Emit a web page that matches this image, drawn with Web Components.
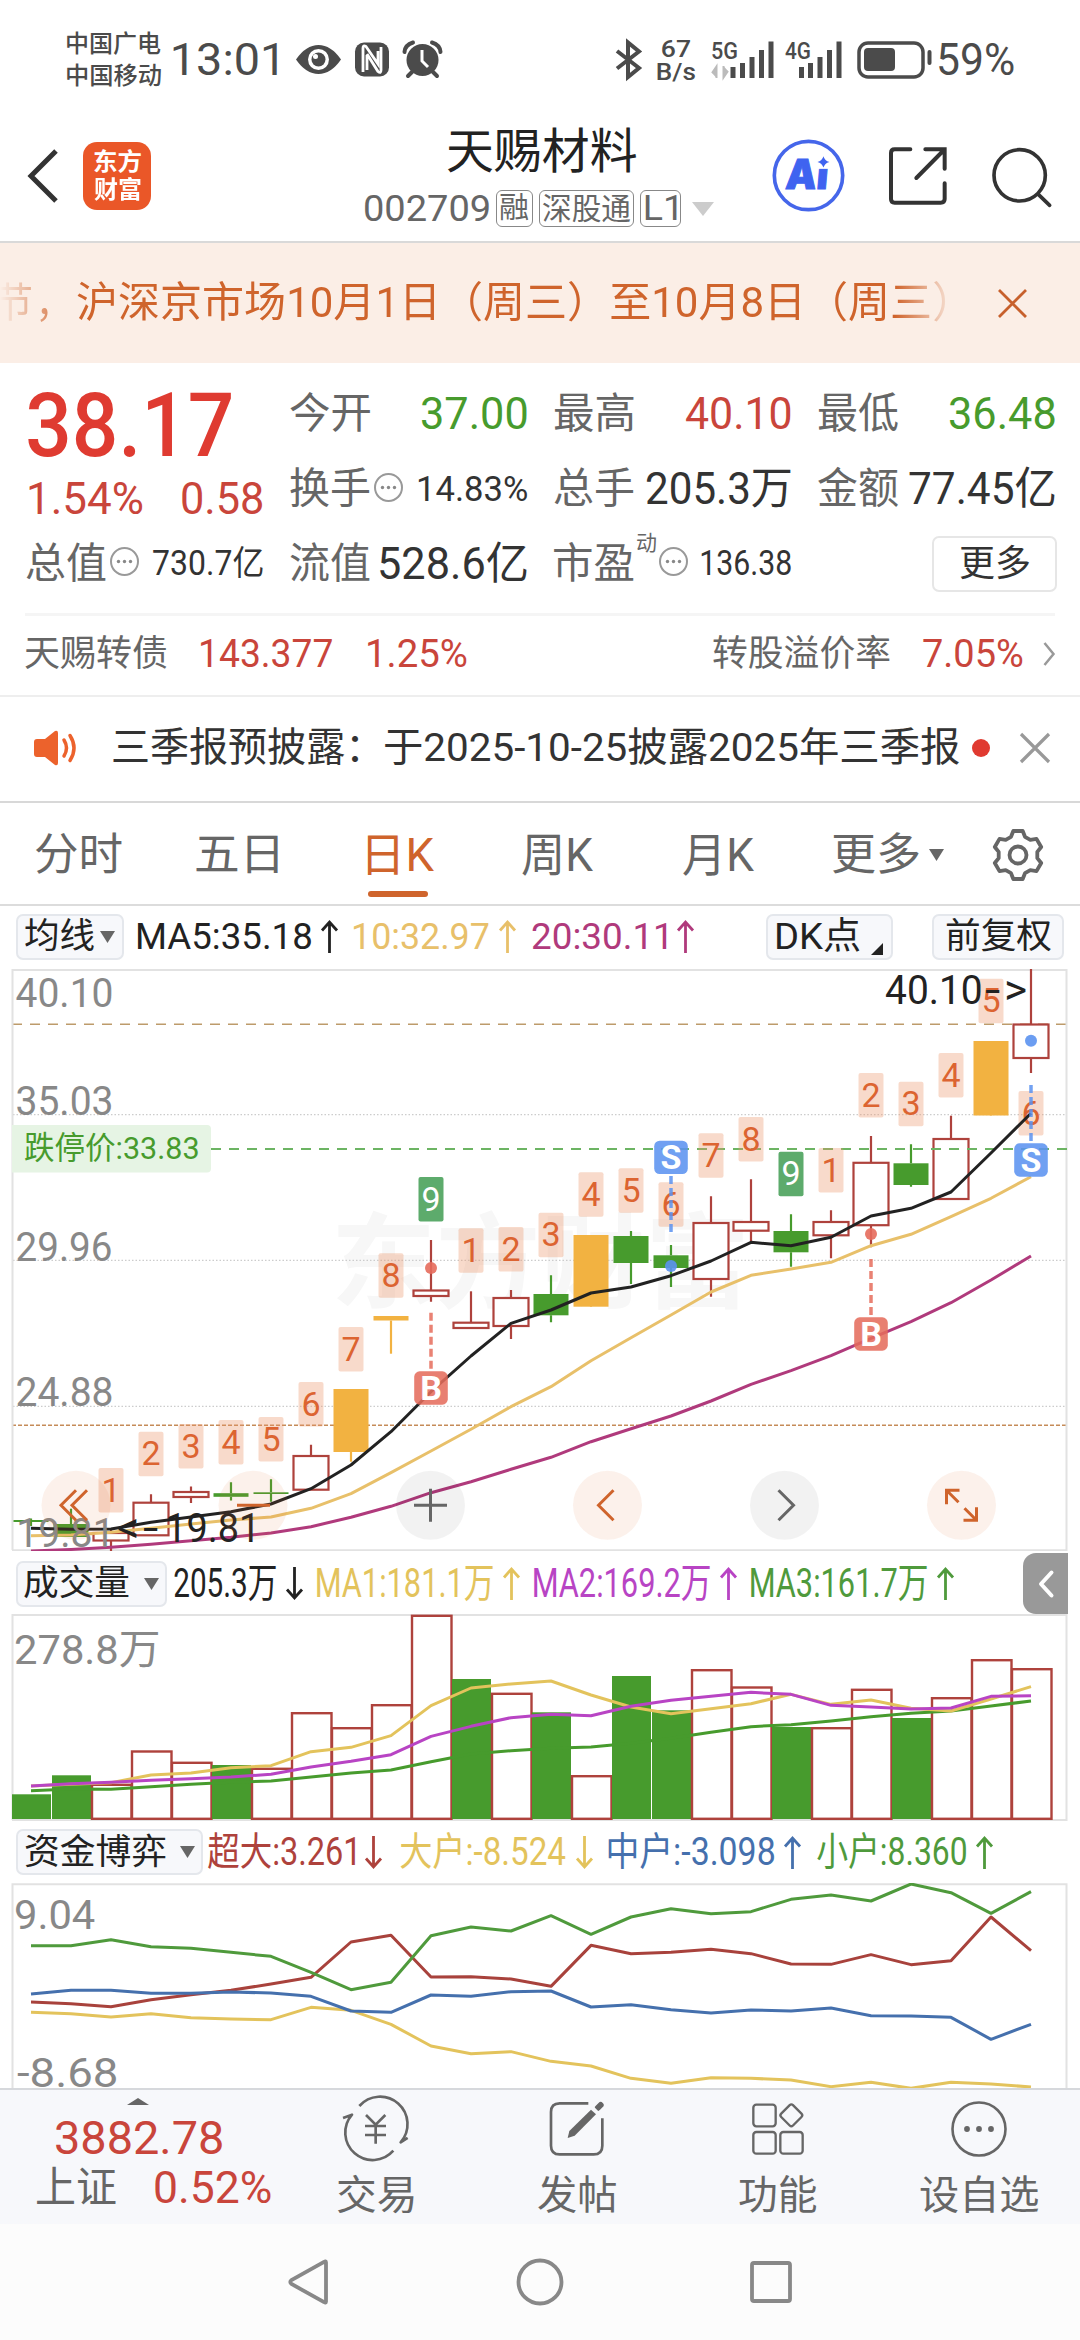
<!DOCTYPE html>
<html lang="zh-CN">
<head>
<meta charset="utf-8">
<title>天赐材料 002709</title>
<style>
  html, body { margin: 0; padding: 0; background: #fff; }
  body { width: 1080px; height: 2340px; overflow: hidden; font-family: Roboto, "Noto Sans CJK SC", sans-serif; color: #222; }
</style>
</head>
<body>
<stock-page></stock-page>

<script>
const FONT = 'Roboto, "Noto Sans CJK SC", sans-serif';
const RED = '#c9453b', GREEN = '#479b2d', GREY = '#666';
const measureCtx = document.createElement('canvas').getContext('2d');

// Ink extent of a text, without its side bearings
function inkOf(text, size, weight = 400) {
  measureCtx.font = `${weight} ${size}px ${FONT}`;
  const m = measureCtx.measureText(text);
  return { left: -m.actualBoundingBoxLeft, width: m.actualBoundingBoxLeft + m.actualBoundingBoxRight };
}

class BaseElement extends HTMLElement {
  constructor() {
    super();
    this.attachShadow({ mode: 'open' });
  }
  connectedCallback() {
    this.shadowRoot.innerHTML = `<style>:host { display: block; box-sizing: border-box; } svg { display: block; flex: none; overflow: visible; } ${this.styles()}</style>${this.html()}`;
  }
  styles() { return ''; }
  html() { return '<slot></slot>'; }
}

// Text squeezed to a given ink width: <fit-text w size weight c gap>
class FitText extends BaseElement {
  styles() {
    const size = +this.getAttribute('size') || 40;
    const weight = this.getAttribute('weight') || 400;
    const ink = inkOf(this.textContent, size, weight);
    const w = +this.getAttribute('w') || ink.width;
    const scale = w / ink.width;
    return `
      :host {
        flex: none; width: ${w}px; height: ${size}px; line-height: ${size}px;
        font-size: ${size}px; font-weight: ${weight}; white-space: nowrap;
        margin-left: ${this.getAttribute('gap') || 0}px;
        color: ${this.getAttribute('c') || 'inherit'};
      }
      span { display: block; width: max-content; transform-origin: 0 0; transform: translateX(${-ink.left * scale}px) scaleX(${scale}); }
    `;
  }
  html() { return '<span><slot></slot></span>'; }
}
customElements.define('fit-text', FitText);

class StatusBar extends BaseElement {
  styles() {
    return `
      :host { height: 110px; padding: 10px 0 0 67px; display: flex; align-items: center; color: #4b4b4b; }
      .carriers { display: flex; flex-direction: column; gap: 8.5px; }
      .icons { margin-left: 19px; }
      .right { margin-left: 173px; }
      .rate { display: flex; flex-direction: column; gap: 0; align-items: center; margin-left: 16px; margin-top: 1px; }
      .signal { margin-left: 17px; }
    `;
  }
  html() {
    return `
      <div class="carriers">
        <fit-text w="94" size="24" weight="500">中国广电</fit-text>
        <fit-text w="94" size="24" weight="500">中国移动</fit-text>
      </div>
      <fit-text w="104" size="44" gap="12">13:01</fit-text>
      <svg class="icons" width="146" height="38" viewBox="295 41 146 38">
        <path d="M295 59.5Q305 45 317.500 45T340 59.500Q330 74 317.500 74T295 59.500Z" fill="#4b4b4b"/>
        <circle cx="317.500" cy="59.500" r="10.500" fill="#fff"/><circle cx="317.500" cy="59.500" r="7" fill="#4b4b4b"/><circle cx="314.500" cy="56.500" r="2.500" fill="#fff"/>
        <rect x="354" y="42.500" width="34" height="34" rx="9" fill="#4b4b4b"/>
        <path d="M362 72V48q0-3 3-1.500L377 64V51M366 55v15M380 47v23q0 4-3 1.500L366 54" fill="none" stroke="#fff" stroke-width="2.800"/>
        <circle cx="421.500" cy="60" r="16" fill="#4b4b4b"/>
        <path d="M403.500 52Q404 45 412 42.500M439.500 52Q439 45 431 42.500M411 72l-4 4M432 72l4 4" fill="none" stroke="#4b4b4b" stroke-width="4" stroke-linecap="round"/>
        <path d="M421 50v11l6 6" fill="none" stroke="#fff" stroke-width="3"/>
      </svg>
      <svg class="right" width="26" height="38" viewBox="614 41 26 38">
        <path d="M616 51l22 17-11 9V42.500l11 9-22 17" fill="none" stroke="#4b4b4b" stroke-width="4"/>
      </svg>
      <div class="rate">
        <fit-text w="29" size="23" weight="500">67</fit-text>
        <fit-text w="38" size="23" weight="500">B/s</fit-text>
      </div>
      <svg class="signal" width="302" height="38" viewBox="712 41 302 38">
        <g fill="#4b4b4b">
          <text x="711" y="58.500" font-size="23.500" font-weight="500" font-family="Roboto" textLength="27" lengthAdjust="spacingAndGlyphs">5G</text>
          <text x="785" y="58.500" font-size="23.500" font-weight="500" font-family="Roboto" textLength="26" lengthAdjust="spacingAndGlyphs">4G</text>
          <path d="M730.500 67h5v11h-5zM740 63h5v15h-5zM749.500 57h5v21h-5zM759 50h5v28h-5zM768.500 41.500h5v36.500h-5z"/>
          <path d="M799 67h5v11h-5zM808 63h5v15h-5zM817.500 57h5v21h-5zM827 50h5v28h-5zM836.500 41.500h5v36.500h-5z"/>
          <rect x="864" y="48" width="31" height="23" rx="4"/>
          <rect x="927.500" y="50" width="4" height="15" rx="2"/>
        </g>
        <rect x="859" y="43" width="64" height="34" rx="9" fill="none" stroke="#4b4b4b" stroke-width="3.500"/>
        <path d="M712 73l4.500-6.500V78M728 71l-4.500 6.500V66" fill="#bbb" stroke="#bbb" stroke-width="2"/>
      </svg>
      <fit-text w="75" size="44" gap="-75">59%</fit-text>
    `;
  }
}
customElements.define('status-bar', StatusBar);

class StockHeader extends BaseElement {
  styles() {
    return `
      :host { height: 133px; padding-left: 26px; display: flex; align-items: center; border-bottom: 2px solid #d9d9d9; }
      .logo { width: 68px; height: 68px; margin-left: 25px; border-radius: 14px; background: #ea5728; color: #fff; display: flex; flex-direction: column; align-items: center; justify-content: center; gap: 4px; }
      .title { width: 349px; margin-left: 214px; display: flex; flex-direction: column; align-items: center; gap: 14px; padding-top: 5px; }
      .code { width: 100%; display: flex; align-items: center; color: ${GREY}; }
      .tag { height: 37px; box-sizing: border-box; border: 1.5px solid #888; border-radius: 6px; display: flex; align-items: center; justify-content: center; }
    `;
  }
  html() {
    return `
      <svg width="32" height="56" viewBox="0 0 32 56"><path d="M30 3L5 28l25 25" fill="none" stroke="#333" stroke-width="5"/></svg>
      <div class="logo">
        <fit-text w="47" size="24" weight="700">东方</fit-text>
        <fit-text w="47" size="24" weight="700">财富</fit-text>
      </div>
      <div class="title">
        <fit-text w="189" size="47.500" gap="3">天赐材料</fit-text>
        <div class="code">
          <fit-text w="124" size="37.500">002709</fit-text>
          <div class="tag" style="width:37px;margin-left:7px"><fit-text w="28" size="29">融</fit-text></div>
          <div class="tag" style="width:96px;margin-left:6px"><fit-text w="88" size="30">深股通</fit-text></div>
          <div class="tag" style="width:41px;margin-left:6px"><fit-text w="32" size="35">L1</fit-text></div>
          <svg width="22" height="14" viewBox="0 0 22 14" style="margin-left:11px"><path d="M0 0h22L11 14z" fill="#ccc"/></svg>
        </div>
      </div>
      <svg width="73" height="73" viewBox="66 26 220 220" style="margin-left:58px">
        <circle cx="176" cy="136" r="103" fill="none" stroke="#4566ea" stroke-width="11"/>
        <text x="104" y="178" font-family="Inter" font-weight="900" font-size="124" fill="#3f63f0" stroke="#3f63f0" stroke-width="3" textLength="128" lengthAdjust="spacingAndGlyphs" transform="translate(17 0) skewX(-5) translate(-1 0)">Ai</text>
        <path d="M197 74h49v42h-49z" fill="#fff"/>
        <path d="M221 78q4 14 18 17-14 4-18 17-4-13-18-17 14-3 18-17z" fill="#3f63f0"/>
      </svg>
      <svg width="60" height="60" viewBox="410 46 180 180" style="margin-left:43px" fill="none" stroke="#333" stroke-width="12" stroke-linecap="round">
        <path d="M477 56H430Q419 56 419 67V205Q419 216 430 216H568Q580 216 580 205V158M522 56H580V114M578 58L495 142"/>
      </svg>
      <svg width="62" height="62" viewBox="720 36 186 186" style="margin-left:43px" fill="none" stroke="#333" stroke-width="11" stroke-linecap="round">
        <circle cx="806" cy="127" r="77"/><path d="M862 184L896 217"/>
      </svg>
    `;
  }
}
customElements.define('stock-header', StockHeader);

class NoticeBanner extends BaseElement {
  styles() {
    return `
      :host { height: 120px; background: #fbeee6; color: #cf642c; display: flex; align-items: center; }
      .marquee { width: 950px; height: 60px; overflow: hidden; display: flex; align-items: center; -webkit-mask-image: linear-gradient(90deg, transparent 0, #000 70px, #000 895px, transparent 955px); }
    `;
  }
  html() {
    return `
      <div class="marquee">
        <fit-text w="34" size="41" gap="-3">节</fit-text>
        <fit-text w="8" size="41" gap="9">，</fit-text>
        <fit-text w="868" size="42.500" gap="29">沪深京市场10月1日（周三）至10月8日（周三）</fit-text>
      </div>
      <svg width="29" height="29" viewBox="0 0 29 29" style="margin-left:48px"><path d="M1 1l27 27M28 1L1 28" stroke="#c7602c" stroke-width="2.800"/></svg>
    `;
  }
}
customElements.define('notice-banner', NoticeBanner);

const dots = '<svg width="31" height="31" viewBox="0 0 31 31" style="margin:0 0 4px 3px"><circle cx="15.500" cy="15.500" r="13.500" fill="none" stroke="#999" stroke-width="2"/><g fill="#888"><circle cx="9.500" cy="15.500" r="1.700"/><circle cx="15.500" cy="15.500" r="1.700"/><circle cx="21.500" cy="15.500" r="1.700"/></g></svg>';

// One label / value pair; the tip attribute adds the round hint icon
class QuoteCell extends BaseElement {
  styles() {
    return `
      :host { display: flex; align-items: center; }
      .value { margin-left: auto; }
      .sup { align-self: flex-start; margin: 7px -1px 0 3px; }
    `;
  }
  html() {
    const a = name => this.getAttribute(name);
    return `
      <fit-text w="80" size="42" c="${GREY}">${a('label')}</fit-text>
      ${a('sup') ? `<fit-text class="sup" w="19" size="21" c="${GREY}">${a('sup')}</fit-text>` : ''}
      ${this.hasAttribute('tip') ? dots : ''}
      <div class="value"><fit-text w="${a('w')}" size="${this.hasAttribute('tip') ? 34.5 : 44}" c="${a('c') || '#333'}">${a('value')}</fit-text></div>
    `;
  }
}
customElements.define('quote-cell', QuoteCell);

class QuotePanel extends BaseElement {
  styles() {
    return `
      :host { height: 250px; padding: 13px 25px 0 26px; display: grid; grid-template: 76px 74px 75px / repeat(4, 1fr); column-gap: 27px; }
      .price { grid-row: 1 / 3; display: flex; flex-direction: column; color: ${RED}; }
      .last { height: 98px; display: flex; align-items: center; color: #df3b31; }
      .change { height: 52px; display: flex; align-items: center; justify-content: space-between; padding-left: 3px; }
      .more { justify-self: end; align-self: center; margin-right: -2px; width: 125px; height: 56px; box-sizing: border-box; border: 2px solid #e6e6e6; border-radius: 7px; display: flex; align-items: center; justify-content: center; }
    `;
  }
  html() {
    return `
      <div class="price">
        <div class="last"><fit-text w="203" size="89" weight="500" gap="2">38.17</fit-text></div>
        <div class="change"><fit-text w="113" size="43.500">1.54%</fit-text><fit-text w="81" size="43.500">0.58</fit-text></div>
      </div>
      <quote-cell label="今开" value="37.00" w="105" c="${GREEN}"></quote-cell>
      <quote-cell label="最高" value="40.10" w="105" c="${RED}"></quote-cell>
      <quote-cell label="最低" value="36.48" w="105" c="${GREEN}"></quote-cell>
      <quote-cell label="换手" value="14.83%" w="109" tip></quote-cell>
      <quote-cell label="总手" value="205.3万" w="144"></quote-cell>
      <quote-cell label="金额" value="77.45亿" w="146"></quote-cell>
      <quote-cell label="总值" value="730.7亿" w="110" tip></quote-cell>
      <quote-cell label="流值" value="528.6亿" w="147"></quote-cell>
      <quote-cell label="市盈" sup="动" value="136.38" w="90" tip></quote-cell>
      <div class="more"><fit-text w="69" size="36" c="#333">更多</fit-text></div>
    `;
  }
}
customElements.define('quote-panel', QuotePanel);

class BondRow extends BaseElement {
  styles() {
    return `
      :host { height: 84px; padding: 0 25px; color: ${RED}; border-bottom: 2px solid #eee; }
      .row { height: 82px; box-sizing: border-box; border-top: 3px solid #f5f5f5; display: flex; align-items: center; padding-bottom: 4px; }
    `;
  }
  html() {
    return `
      <div class="row">
        <fit-text w="142" size="36" c="${GREY}">天赐转债</fit-text>
        <fit-text w="131" size="38" gap="34">143.377</fit-text>
        <fit-text w="99" size="38" gap="36">1.25%</fit-text>
        <div style="flex:1"></div>
        <fit-text w="177" size="36" c="${GREY}">转股溢价率</fit-text>
        <fit-text w="100" size="38" gap="33">7.05%</fit-text>
        <svg width="12" height="24" viewBox="0 0 12 24" style="margin-left:20px"><path d="M1.500 1l9 11-9 11" fill="none" stroke="#999" stroke-width="2.500"/></svg>
      </div>
    `;
  }
}
customElements.define('bond-row', BondRow);

class NewsRow extends BaseElement {
  styles() {
    return `:host { height: 106px; padding: 0 31px 2px 33px; display: flex; align-items: center; color: #333; border-bottom: 2px solid #d8d8d8; }`;
  }
  html() {
    return `
      <svg width="46" height="36" viewBox="0 0 46 36">
        <path d="M4 9h8L22 1q3-1 3 2v30q0 3-3 2L12 27H4q-3 0-3-3V12q0-3 3-3z" fill="#ec622c"/>
        <path d="M31 10q5 8 0 16M37 5.500q8 12.500 0 25" fill="none" stroke="#ec622c" stroke-width="3.500" stroke-linecap="round"/>
      </svg>
      <fit-text w="245" size="39.500" gap="34">三季报预披露：</fit-text>
      <fit-text w="575" size="39.500" gap="27">于2025-10-25披露2025年三季报</fit-text>
      <svg width="18" height="18" style="margin-left:12px"><circle cx="9" cy="9" r="9" fill="#e03a30"/></svg>
      <svg width="30" height="30" viewBox="0 0 30 30" style="margin-left:30px"><path d="M1 1l28 28M29 1L1 29" stroke="#999" stroke-width="3.200"/></svg>
    `;
  }
}
customElements.define('news-row', NewsRow);

class PeriodTabs extends BaseElement {
  gear() {
    const pts = [];
    for (let k = 0; k < 6; k++) {
      [[-21, 19.5], [-11, 24.5], [11, 24.5], [21, 19.5]].forEach(([d, r]) => {
        const a = (k * 60 - 90 + d) * Math.PI / 180;
        pts.push(`${(27 + r * Math.cos(a)).toFixed(1)},${(27 + r * Math.sin(a)).toFixed(1)}`);
      });
    }
    return `<svg width="54" height="54" viewBox="0 0 54 54" style="margin-left:47px" fill="none" stroke="${GREY}" stroke-width="3.800" stroke-linejoin="round"><polygon points="${pts.join(' ')}"/><circle cx="27" cy="27" r="8.500"/></svg>`;
  }
  styles() {
    return `
      :host { height: 103px; padding: 2px 0 0 35px; display: flex; align-items: center; color: ${GREY}; border-bottom: 2px solid #dcdcdc; }
      .on { position: relative; color: #cf642c; margin-left: 90px; }
      .on::after { content: ""; position: absolute; left: 0; top: 59px; width: 60px; height: 6px; border-radius: 3px; background: #cf642c; }
    `;
  }
  html() {
    return `
      <fit-text w="87" size="44">分时</fit-text>
      <fit-text w="82" size="44" gap="74">五日</fit-text>
      <div class="on"><fit-text w="66" size="46">日K</fit-text></div>
      <fit-text w="71" size="46" gap="88">周K</fit-text>
      <fit-text w="71" size="46" gap="90">月K</fit-text>
      <fit-text w="86" size="44" gap="79">更多</fit-text>
      <svg width="15" height="12" style="margin-left:10px"><path d="M0 0h15L7.500 12z" fill="${GREY}"/></svg>
      ${this.gear()}
    `;
  }
}
customElements.define('period-tabs', PeriodTabs);

class PillButton extends BaseElement {
  styles() {
    return `
      :host { flex: none; width: ${this.getAttribute('w')}px; height: 46px; margin-left: ${this.getAttribute('gap') || 0}px; border: 2px solid #e4e7ec; border-radius: 7px; background: #f7f8fb; display: flex; align-items: center; justify-content: center; }
      .corner { align-self: flex-end; margin-bottom: 3px; }
    `;
  }
  html() {
    const arrow = this.getAttribute('arrow');
    return `<slot></slot>
      ${arrow === 'down' ? `<svg width="15" height="12" style="margin-left:${this.getAttribute('arrow-gap') || 6}px"><path d="M0 0h15L7.500 12z" fill="${GREY}"/></svg>` : ''}
      ${arrow === 'corner' ? '<svg class="corner" width="12" height="12" style="margin-left:11px"><path d="M12 0v12H0z" fill="#222"/></svg>' : ''}`;
  }
}
customElements.define('pill-button', PillButton);

// Thin up / down arrow that follows a legend value
class TrendArrow extends BaseElement {
  styles() {
    return `:host { flex: none; margin-left: 9px; width: 19px; color: ${this.getAttribute('c')}; ${this.hasAttribute('down') ? 'transform: scaleY(-1);' : ''} }`;
  }
  html() {
    return '<svg width="19" height="33" viewBox="0 0 19 33"><path d="M9.500 33V2M2 10.500L9.500 2l7.500 8.500" fill="none" stroke="currentColor" stroke-width="2.800"/></svg>';
  }
}
customElements.define('trend-arrow', TrendArrow);

class ChartLegend extends BaseElement {
  styles() {
    return `:host { height: ${this.getAttribute('h')}px; padding-left: 16px; display: flex; align-items: center; }`;
  }
}
customElements.define('chart-legend', ChartLegend);

class ChartBase extends BaseElement {
  styles() { return ':host { position: relative; }'; }
  cx(i) { return 31 + i * 40; }
  label(x, y, size, text, width, fill = '#888', weight = 400) {
    const ink = inkOf(text, size, weight);
    const s = width / ink.width;
    return `<text transform="translate(${x} ${y}) scale(${s.toFixed(4)} 1)" x="${-ink.left}" font-size="${size}" font-weight="${weight}" fill="${fill}">${text.replace(/</g, '&lt;')}</text>`;
  }
  line(values, color, width = 3) {
    return `<polyline points="${values.map((v, i) => this.cx(i) + ',' + v).join(' ')}" fill="none" stroke="${color}" stroke-width="${width}" stroke-linejoin="round"/>`;
  }
  svg(top, height, body) {
    return `<svg width="1080" height="${height}" viewBox="0 ${top} 1080 ${height}" font-family='${FONT}' style="overflow:hidden">${body}</svg>`;
  }
}

class KChart extends ChartBase {
  constructor() {
    super();
    // kind, body top, body bottom, wick top, wick bottom
    this.candles = [
      ['g', 1520, 1522, 1518.5, 1526], ['g', 1524, 1537, 1508.7, 1537], ['r', 1533, 1540.5, 1530, 1551.7],
      ['r', 1502.7, 1535.3, 1494.3, 1535], ['r', 1492, 1497, 1486.5, 1503], ['g', 1493.2, 1496.8, 1482.3, 1500.5],
      ['g', 1492.3, 1494, 1479.3, 1501.7], ['r', 1456, 1489.7, 1444.7, 1489], ['o', 1389, 1452, 1389, 1461.7],
      ['o', 1316, 1320.5, 1316, 1353.7], ['r', 1290.5, 1296, 1240, 1301.7], ['r', 1322.7, 1328, 1291.3, 1328],
      ['r', 1298, 1326, 1290, 1339], ['g', 1294, 1315.3, 1275.3, 1322.3], ['o', 1235, 1306.7, 1235, 1306],
      ['g', 1236, 1263, 1231, 1284], ['g', 1255.3, 1268, 1245, 1287], ['r', 1223, 1279, 1196.3, 1296.7],
      ['r', 1222, 1230.7, 1179.3, 1241.7], ['g', 1231, 1252.3, 1214.3, 1266.7], ['r', 1222, 1235.3, 1210.3, 1258.3],
      ['r', 1162.8, 1225.2, 1136, 1247.3], ['g', 1163.3, 1185, 1144.3, 1186.7], ['r', 1139, 1199, 1115.7, 1199],
      ['o', 1041, 1115.5, 1041, 1115], ['r', 1024.5, 1058, 969, 1073]
    ];
    // candle index, number, tag top
    this.tags = [
      [2, 1, 1468], [3, 2, 1431.7], [4, 3, 1424], [5, 4, 1420], [6, 5, 1417], [7, 6, 1382], [8, 7, 1327], [9, 8, 1253.3],
      [10, 9, 1177], [11, 1, 1228.3], [12, 2, 1227], [13, 3, 1212.7], [14, 4, 1172.3], [15, 5, 1168.3], [16, 6, 1182.3],
      [17, 7, 1133.3], [18, 8, 1117], [19, 9, 1151.7], [20, 1, 1148], [21, 2, 1073], [22, 3, 1081.7], [23, 4, 1053],
      [24, 5, 978.7], [25, 6, 1091]
    ];
    this.ma5 = [1528.3, 1529.3, 1529, 1522.3, 1517, 1511.7, 1504, 1488.7, 1465, 1431.7, 1391.7, 1356, 1323.3, 1310, 1293, 1287, 1275.7, 1261, 1242.3, 1245.7, 1237.3, 1216, 1208.3, 1192, 1153, 1113.3];
    this.ma10 = [1535.7, 1535, 1532.3, 1528.3, 1524, 1520, 1517, 1508.3, 1493.7, 1472.7, 1451, 1429.3, 1406.7, 1386.7, 1360.7, 1337.7, 1315, 1292, 1275.3, 1269, 1262.3, 1245.7, 1234.3, 1216.7, 1198.3, 1176.7];
    this.ma20 = [1551, 1549.5, 1547.3, 1544.3, 1540.7, 1537.3, 1533, 1526.7, 1517.3, 1506.3, 1492.7, 1481.7, 1469.3, 1457.3, 1441.7, 1428.7, 1416, 1401, 1384.3, 1370.7, 1355.7, 1338.3, 1321.7, 1302.7, 1280, 1256];
  }

  candle([kind, top, bottom, high, low], i) {
    const x = this.cx(i);
    const color = { r: '#ae423c', g: '#479b2d', o: '#f2b241' }[kind];
    const wick = `<path d="M${x} ${high}V${top}M${x} ${bottom}V${low}" stroke="${color}" stroke-width="2.200"/>`;
    if (kind === 'r') return wick + `<rect x="${x - 17.5}" y="${top}" width="35" height="${bottom - top}" fill="#fff" stroke="${color}" stroke-width="2.200"/>`;
    return wick + `<rect x="${x - 17.5}" y="${top}" width="35" height="${bottom - top}" fill="${color}"/>`;
  }

  tag([i, n, top]) {
    const x = this.cx(i);
    const nine = n === 9;
    return `<rect x="${x - 12.5}" y="${top}" width="25" height="44.500" rx="2" fill="${nine ? '#5dab6c' : 'rgba(235,150,105,.35)'}"/>
      <text x="${x}" y="${top + 33.5}" text-anchor="middle" font-size="34" fill="${nine ? '#fff' : '#dc6431'}">${n}</text>`;
  }

  marker(i, top, letter, dash0, dash1, dotY) {
    const x = this.cx(i);
    const color = letter === 'S' ? '#5b92f0' : '#e56c5c';
    return `<circle cx="${x}" cy="${dotY}" r="6" fill="${color}" fill-opacity=".9"/>
      <path d="M${x} ${dash0}V${dash1}" stroke="${color}" stroke-opacity=".85" stroke-width="3.500" stroke-dasharray="8 4"/>
      <rect x="${x - 16.8}" y="${top}" width="33.600" height="33.400" rx="5.500" fill="${color}" fill-opacity=".87"/>
      <text x="${x}" y="${top + 28.5}" text-anchor="middle" font-size="34" font-weight="700" fill="#fff">${letter}</text>`;
  }

  floatButton(cx, grey, path) {
    return `<circle cx="${cx}" cy="1505.300" r="34.500" fill="${grey ? 'rgba(0,0,0,.05)' : 'rgba(228,120,60,.1)'}"/>
      <path d="${path}" transform="translate(${cx} 1505.300)" fill="none" stroke="${grey ? '#666' : '#cf642c'}" stroke-width="3"/>`;
  }

  html() {
    return this.svg(969, 582, `
      ${this.label(337, 1300, 104, '东方财富', 406, '#f7f7f7', 700)}
      <g fill="none">
        <path d="M13 1114.700H1067M13 1260.300H1067M13 1406.300H1067" stroke="#ccc" stroke-width="1.200" stroke-dasharray="1.500 2"/>
        <path d="M12 1024.300H1067" stroke="#bd9b6b" stroke-width="1.500" stroke-dasharray="10 8"/>
        <path d="M12 1425.300H1067" stroke="#c58b58" stroke-width="1.600" stroke-dasharray="4 2"/>
        <path d="M12.500 1550V970H1066.500V1550.200H12" stroke="#e2e2e2" stroke-width="2"/>
      </g>
      ${this.label(16.5, 1006.5, 41, '40.10', 95)}
      ${this.label(16.5, 1114.7, 41, '35.03', 95)}
      ${this.label(16.5, 1260.7, 41, '29.96', 95)}
      ${this.label(16.5, 1405.5, 41, '24.88', 95)}
      ${this.candles.map((c, i) => this.candle(c, i)).join('')}
      <path d="M211 1149H1067" stroke="#6cb463" stroke-width="2" stroke-dasharray="10 8"/>
      <path d="M12 1125H207q4 0 4 4V1168.500q0 4-4 4H12z" fill="#e6f4e4"/>
      ${this.label(25, 1159, 31.5, '跌停价:33.83', 173, '#479b2d')}
      ${this.tags.map(t => this.tag(t)).join('')}
      ${this.line(this.ma20, '#b03a7c')}
      ${this.line(this.ma10, '#e8c06a')}
      ${this.line(this.ma5, '#222')}
      ${this.label(19, 1547, 41, '19.81', 88)}
      ${this.marker(10, 1371.3, 'B', 1312.7, 1369, 1268)}
      ${this.marker(16, 1140.7, 'S', 1176, 1232, 1266)}
      ${this.marker(21, 1317.3, 'B', 1259, 1315, 1234)}
      ${this.marker(25, 1143.3, 'S', 1085, 1141, 1040.7)}
      ${this.label(886, 1004, 40.5, '40.10', 95, '#222')}
      ${this.label(985, 1004, 40.5, '-', 15, '#222')}
      ${this.label(1006, 1004, 42, '>', 20, '#222')}
      ${this.label(118, 1542, 42, '<', 19, '#222')}
      ${this.label(143, 1542, 40.5, '-', 15, '#222')}
      ${this.label(168, 1542, 40.5, '19.81', 85, '#222')}
      ${this.floatButton(76, false, 'M0-15L-15 0L0 15M11-15L-4 0L11 15')}
      ${this.floatButton(253, false, 'M-16 0H17')}
      ${this.floatButton(430.5, true, 'M-16.500 0H16.500M0-16.500V16.500')}
      ${this.floatButton(607.5, false, 'M6-15L-9 0L6 15')}
      ${this.floatButton(784.5, true, 'M-6-15L9 0L-6 15')}
      ${this.floatButton(961.5, false, 'M-2-15H-15V-1M-15-15L-3-3M15 2V15H2M15 15L3 3')}
    `);
  }
}
customElements.define('k-chart', KChart);

class VolumeChart extends ChartBase {
  html() {
    const kinds = 'ggrrrgrrrrrgrgrggrrgrrgrrr';
    const tops = [1794.3, 1775.3, 1784.3, 1751, 1762.3, 1765, 1768.3, 1712.7, 1727.7, 1704.7, 1615.3, 1679, 1693.3, 1712.3, 1775.7, 1676, 1710.3, 1669.7, 1687, 1727, 1727.7, 1689.3, 1718, 1697.7, 1659.7, 1668.7];
    const y = list => list.map(v => v / 3 + 1600);
    const ma1 = y([558, 553, 548, 525, 519, 503, 497, 455, 442, 407, 317, 264, 252, 243, 285, 321, 341, 326, 311, 283, 313, 300, 325, 333, 297, 260]);
    const ma2 = y([558, 551, 547, 541, 536, 531, 523, 501, 484, 464, 409, 379, 353, 343, 347, 319, 301, 289, 277, 283, 316, 321, 327, 324, 289, 287]);
    const ma3 = y([572, 567, 568, 560, 553, 547, 543, 531, 519, 510, 485, 462, 452, 445, 441, 430, 415, 397, 380, 374, 363, 350, 340, 333, 318, 303]);
    const bars = tops.map((top, i) => {
      const x = 12 + i * 40;
      return kinds[i] === 'g'
        ? `<rect x="${x}" y="${top}" width="39" height="${1819 - top}" fill="#479b2d"/>`
        : `<rect x="${x}" y="${top + 0.5}" width="39.500" height="${1818.300 - top}" fill="#fff" stroke="#ae423c" stroke-width="2.400"/>`;
    }).join('');
    return this.svg(1614, 207, `
      <path d="M12.500 1820V1615H1066.500V1820H12" fill="none" stroke="#e2e2e2" stroke-width="2"/>
      ${bars}
      ${this.line(ma3, '#479b2d')}${this.line(ma1, '#e3c35c')}${this.line(ma2, '#b844c4')}
      ${this.label(15, 1664.3, 41.5, '278.8万', 143)}
    `);
  }
}
customElements.define('volume-chart', VolumeChart);

class FlowChart extends ChartBase {
  html() {
    const y = list => list.map(v => v / 3 + 1860);
    const small = y([257, 257, 239, 260, 265, 277, 289, 337, 389, 367, 227, 201, 213, 167, 223, 171, 146, 161, 155, 118, 105, 123, 72, 98, 160, 95]);
    const huge = y([426, 431, 440, 419, 404, 391, 372, 352, 246, 226, 351, 350, 357, 379, 256, 281, 277, 268, 281, 312, 313, 284, 314, 302, 171, 272]);
    const mid = y([402, 391, 391, 400, 400, 396, 399, 409, 453, 457, 405, 409, 395, 393, 441, 434, 449, 459, 450, 453, 444, 467, 468, 472, 538, 493]);
    const big = y([457, 461, 471, 461, 473, 477, 479, 442, 451, 493, 558, 581, 575, 604, 618, 655, 670, 653, 655, 660, 680, 667, 685, 667, 672, 681]);
    return this.svg(1883, 205, `
      <path d="M12.500 2090V1884.200H1066.500V2090" fill="none" stroke="#e2e2e2" stroke-width="2"/>
      ${this.label(16, 1928.5, 41.5, '9.04', 79)}
      ${this.label(17, 2086.5, 41.5, '-8.68', 100)}
      ${this.line(big, '#e3c35c')}${this.line(huge, '#a8423c')}${this.line(mid, '#4570ad')}${this.line(small, '#4f9a3c')}
    `);
  }
}
customElements.define('flow-chart', FlowChart);

class NavItem extends BaseElement {
  styles() {
    return `
      :host { width: 201.400px; height: 100%; display: flex; flex-direction: column; align-items: center; }
      .icon { height: 78px; margin-bottom: 8px; display: flex; align-items: center; }
    `;
  }
  html() {
    return `<div class="icon"><slot></slot></div><fit-text w="${this.getAttribute('w')}" size="39.500">${this.getAttribute('label')}</fit-text>`;
  }
}
customElements.define('nav-item', NavItem);

class BottomNav extends BaseElement {
  styles() {
    return `
      :host { height: 136px; background: #f7f8fb; border-top: 2px solid #d6d8dc; color: ${GREY}; display: flex; }
      .index { width: 275px; display: flex; flex-direction: column; align-items: flex-start; color: ${RED}; padding-top: 8px; }
      .row { display: flex; align-items: center; gap: 39px; margin: 5px 0 0 37px; }
    `;
  }
  html() {
    return `
      <div class="index">
        <svg width="22" height="7" style="margin-left:127px"><path d="M0 7L11 0l11 7z" fill="${GREY}"/></svg>
        <fit-text w="166" size="47" gap="56" style="margin-top:9px">3882.78</fit-text>
        <div class="row"><fit-text w="79" size="42" c="${GREY}">上证</fit-text><fit-text w="116" size="44">0.52%</fit-text></div>
      </div>
      <nav-item label="交易" w="77">
        <svg width="68" height="61.300" viewBox="36 22 204 184" fill="none" stroke="#666" stroke-width="8">
          <path d="M88 46A82 82 0 0 1 212 155L233 142M190 180A82 82 0 0 1 66 72L39 82" stroke-linejoin="round"/>
          <path d="M108 73L137 102L166 73M137 102V159M105 106H168M105 133H168"/>
        </svg>
      </nav-item>
      <nav-item label="发帖" w="78">
        <svg width="60" height="60" viewBox="652 24 180 180" fill="none" stroke="#666" stroke-width="8">
          <path d="M776 37H690Q664 37 664 63V164Q664 190 690 190H792Q818 190 818 164V82"/>
          <path d="M714 141L719 120L784 56L799 70L735 134Z" fill="#666" stroke="none"/>
          <path d="M804 51L813 42" stroke-width="18" stroke-linecap="round"/><path d="M786 44L806 64" stroke="#f7f8fb" stroke-width="5"/>
        </svg>
      </nav-item>
      <nav-item label="功能" w="78">
        <svg width="56" height="56" viewBox="1260 30 168 168" fill="none" stroke="#666" stroke-width="7" stroke-linejoin="round">
          <rect x="1270" y="41" width="67" height="65" rx="9"/><rect x="1270" y="123" width="67" height="65" rx="9"/><rect x="1351" y="123" width="67" height="65" rx="9"/>
          <rect x="1359" y="48" width="50" height="50" rx="7" transform="rotate(45 1384 73)"/>
        </svg>
      </nav-item>
      <nav-item label="设自选" w="119">
        <svg width="58" height="58" viewBox="0 0 58 58"><circle cx="29" cy="29" r="26.500" fill="none" stroke="#666" stroke-width="2.600"/><g fill="#666"><circle cx="17" cy="29" r="2.900"/><circle cx="29" cy="29" r="2.900"/><circle cx="41" cy="29" r="2.900"/></g></svg>
      </nav-item>
    `;
  }
}
customElements.define('bottom-nav', BottomNav);

class SystemNav extends BaseElement {
  styles() { return ':host { height: 116px; background: #fcfcfc; display: flex; align-items: center; padding-left: 287px; gap: 186px; }'; }
  html() {
    return `
      <svg width="43" height="50" viewBox="0 0 43 50"><path d="M39 5.500V44.500Q39 46.500 37 45L4.500 27Q2 25 4.500 23L37 5Q39 3.500 39 5.500Z" fill="none" stroke="#888" stroke-width="3.800"/></svg>
      <svg width="48" height="48" viewBox="0 0 48 48"><circle cx="24" cy="24" r="21.500" fill="none" stroke="#888" stroke-width="3.800"/></svg>
      <svg width="42" height="42" viewBox="0 0 42 42"><rect x="2" y="2" width="38" height="38" rx="2" fill="none" stroke="#888" stroke-width="3.800"/></svg>
    `;
  }
}
customElements.define('system-nav', SystemNav);

class StockPage extends BaseElement {
  styles() {
    return `
      :host { width: 1080px; height: 2340px; display: flex; flex-direction: column; }
      :host > * { flex: none; }
      .side { width: 45px; height: 61px; margin-left: 68px; border-radius: 13px 0 0 13px; background: #999; display: flex; align-items: center; justify-content: center; }
      chart-legend { flex: none; }
    `;
  }
  html() {
    return `
      <status-bar></status-bar>
      <stock-header></stock-header>
      <notice-banner></notice-banner>
      <quote-panel></quote-panel>
      <bond-row></bond-row>
      <news-row></news-row>
      <period-tabs></period-tabs>
      <chart-legend h="63" style="padding-bottom:2px">
        <pill-button w="108" arrow="down"><fit-text w="69" size="35">均线</fit-text></pill-button>
        <fit-text w="173" size="37" gap="14">MA5:35.18</fit-text><trend-arrow c="#222"></trend-arrow>
        <fit-text w="135" size="37" gap="15" c="#e8c06a">10:32.97</fit-text><trend-arrow c="#e8c06a"></trend-arrow>
        <fit-text w="135" size="37" gap="15" c="#b03a7c">20:30.11</fit-text><trend-arrow c="#b03a7c"></trend-arrow>
        <pill-button w="127" gap="71" arrow="corner"><fit-text w="83" size="37">DK点</fit-text></pill-button>
        <pill-button w="132" gap="39"><fit-text w="105" size="35">前复权</fit-text></pill-button>
      </chart-legend>
      <k-chart></k-chart>
      <chart-legend h="63" style="padding-top:2px">
        <pill-button w="151" arrow="down" arrow-gap="15"><fit-text w="105" size="35">成交量</fit-text></pill-button>
        <fit-text w="102" size="40" gap="7">205.3万</fit-text><trend-arrow down c="#222"></trend-arrow>
        <fit-text w="176" size="40" gap="13" c="#e3c35c">MA1:181.1万</fit-text><trend-arrow c="#e3c35c"></trend-arrow>
        <fit-text w="176" size="40" gap="13" c="#b844c4">MA2:169.2万</fit-text><trend-arrow c="#b844c4"></trend-arrow>
        <fit-text w="176" size="40" gap="13" c="#4f9a3c">MA3:161.7万</fit-text><trend-arrow c="#4f9a3c"></trend-arrow>
        <div class="side"><svg width="16" height="28" viewBox="0 0 16 28"><path d="M13.500 2.500L3 14l10.500 11.500" fill="none" stroke="#fff" stroke-width="4" stroke-linecap="round" stroke-linejoin="round"/></svg></div>
      </chart-legend>
      <volume-chart></volume-chart>
      <chart-legend h="62">
        <pill-button w="187" arrow="down" arrow-gap="14"><fit-text w="141" size="35">资金博弈</fit-text></pill-button>
        <fit-text w="147" size="39" gap="5" c="#ae423c">超大:3.261</fit-text><trend-arrow down c="#ae423c"></trend-arrow>
        <fit-text w="166" size="39" gap="17" c="#e3c35c">大户:-8.524</fit-text><trend-arrow down c="#e3c35c"></trend-arrow>
        <fit-text w="166" size="39" gap="14" c="#4570ad">中户:-3.098</fit-text><trend-arrow c="#4570ad"></trend-arrow>
        <fit-text w="149" size="39" gap="15" c="#4f9a3c">小户:8.360</fit-text><trend-arrow c="#4f9a3c"></trend-arrow>
      </chart-legend>
      <flow-chart></flow-chart>
      <bottom-nav></bottom-nav>
      <system-nav></system-nav>
    `;
  }
}
customElements.define('stock-page', StockPage);
</script>
</body>
</html>
